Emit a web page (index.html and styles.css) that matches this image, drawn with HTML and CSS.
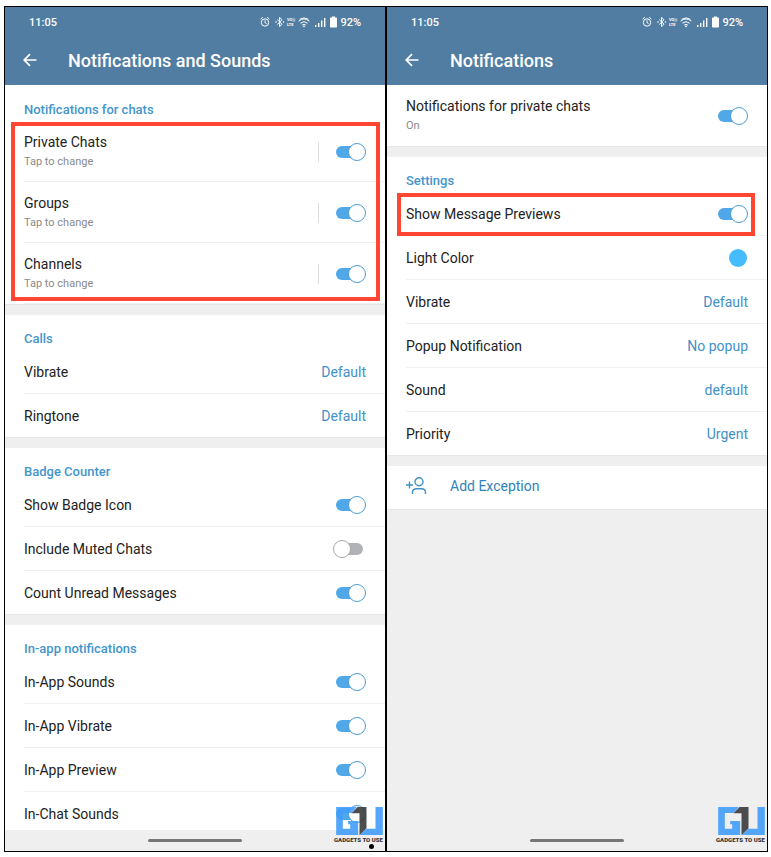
FILE: index.html
```
<!DOCTYPE html>
<html lang="en">
<head>
    <meta charset="UTF-8">
    <meta name="viewport" content="width=device-width, initial-scale=1.0">
    <title>Notifications and Sounds</title>
    <link rel="stylesheet" href="styles.css">
</head>
<body>
    <!-- Shared drawings -->
    <svg class="defs" aria-hidden="true">
        <symbol id="status-icons" viewBox="0 0 78 14" overflow="visible">
            <g fill="none" stroke="#fff" stroke-width="1">
                <circle cx="5" cy="7.5" r="3.7"/>
                <path d="M5 5.3v2.4l1.6 1M.6 4.2 2.8 2.2M9.4 4.2 7.2 2.2"/>
                <path d="M17.3 4.6 22 9.2 19.6 11.6V2.4L22 4.8 17.3 9.4"/>
                <path d="M38.6 6.2q5.4-4.6 10.8 0M40.4 8.2q3.6-3 7.2 0M42.2 10.1q1.8-1.4 3.6 0M39.6 4.3q4.4-2.8 8.8 0"/>
            </g>
            <g fill="#fff">
                <circle cx="16" cy="7" r=".8"/>
                <circle cx="23.4" cy="7" r=".8"/>
                <circle cx="44" cy="11.3" r=".9"/>
                <path d="M55 10h1.4v2H55zM58 8h1.4v4H58zM61 5.5h1.4V12H61zM64 3h1.4v9H64z"/>
                <path d="M72 1.5h3v1h1.2q.8 0 .8.8v8.4q0 .8-.8.8h-5.4q-.8 0-.8-.8V3.3q0-.8.8-.8H72z"/>
            </g>
        </symbol>
        <symbol id="back-arrow" viewBox="0 0 14 14">
            <path d="M13.500 7H1.200M7 1.200 1.200 7 7 12.800" fill="none" stroke="#fff" stroke-width="1.700"/>
        </symbol>
        <symbol id="logo" viewBox="0 0 140 84">
            <path fill="#429efb" d="M0 0h62L46 18H20v47h22V52H36V42h30v42H0z"/>
            <path fill="#429efb" d="M90 65h28V0h22v84H70z"/>
            <path fill="#3b3b3d" d="M64 0h27v64L70 84V19H46z"/>
        </symbol>
    </svg>

    <div class="screens">
        <!-- Notifications and Sounds -->
        <div class="screen">
            <div class="header">
                <div class="status-bar">
                    <span>11:05</span>
                    <svg class="status-icons" viewBox="0 0 78 14">
                        <use href="#status-icons"/>
                        <text class="volte" x="27" y="6">VO))</text>
                        <text class="volte" x="27" y="11">LTE</text>
                    </svg>
                    <span>92%</span>
                </div>
                <div class="title-bar">
                    <button class="back" aria-label="Back"><svg><use href="#back-arrow"/></svg></button>
                    <h1>Notifications and Sounds</h1>
                </div>
            </div>
            <div class="content">
                <div class="section first">
                    <h2>Notifications for chats</h2>
                    <div class="highlight">
                        <div class="row tall">
                            <label for="private-chats">Private Chats<small>Tap to change</small></label>
                            <span class="divider"></span>
                            <input type="checkbox" class="toggle" id="private-chats" checked>
                        </div>
                        <div class="row tall">
                            <label for="groups">Groups<small>Tap to change</small></label>
                            <span class="divider"></span>
                            <input type="checkbox" class="toggle" id="groups" checked>
                        </div>
                        <div class="row tall">
                            <label for="channels">Channels<small>Tap to change</small></label>
                            <span class="divider"></span>
                            <input type="checkbox" class="toggle" id="channels" checked>
                        </div>
                    </div>
                </div>
                <div class="section">
                    <h2>Calls</h2>
                    <button class="row">Vibrate<span class="value">Default</span></button>
                    <button class="row">Ringtone<span class="value">Default</span></button>
                </div>
                <div class="section">
                    <h2>Badge Counter</h2>
                    <div class="row">
                        <label for="badge-icon">Show Badge Icon</label>
                        <input type="checkbox" class="toggle" id="badge-icon" checked>
                    </div>
                    <div class="row">
                        <label for="muted-chats">Include Muted Chats</label>
                        <input type="checkbox" class="toggle" id="muted-chats">
                    </div>
                    <div class="row">
                        <label for="unread">Count Unread Messages</label>
                        <input type="checkbox" class="toggle" id="unread" checked>
                    </div>
                </div>
                <div class="section">
                    <h2>In-app notifications</h2>
                    <div class="row">
                        <label for="app-sounds">In-App Sounds</label>
                        <input type="checkbox" class="toggle" id="app-sounds" checked>
                    </div>
                    <div class="row">
                        <label for="app-vibrate">In-App Vibrate</label>
                        <input type="checkbox" class="toggle" id="app-vibrate" checked>
                    </div>
                    <div class="row">
                        <label for="app-preview">In-App Preview</label>
                        <input type="checkbox" class="toggle" id="app-preview" checked>
                    </div>
                    <div class="row">
                        <label for="chat-sounds">In-Chat Sounds</label>
                        <input type="checkbox" class="toggle" id="chat-sounds" checked>
                    </div>
                </div>
            </div>
            <div class="nav-bar"><span class="pill"></span></div>
            <div class="watermark">
                <svg><use href="#logo"/></svg>
                <span>GADGETS TO USE</span>
            </div>
            <span class="dot"></span>
        </div>

        <!-- Notifications for private chats -->
        <div class="screen">
            <div class="header">
                <div class="status-bar">
                    <span>11:05</span>
                    <svg class="status-icons" viewBox="0 0 78 14">
                        <use href="#status-icons"/>
                        <text class="volte" x="27" y="6">VO))</text>
                        <text class="volte" x="27" y="11">LTE</text>
                    </svg>
                    <span>92%</span>
                </div>
                <div class="title-bar">
                    <button class="back" aria-label="Back"><svg><use href="#back-arrow"/></svg></button>
                    <h1>Notifications</h1>
                </div>
            </div>
            <div class="content">
                <div class="section">
                    <div class="row tall">
                        <label for="private">Notifications for private chats<small>On</small></label>
                        <input type="checkbox" class="toggle" id="private" checked>
                    </div>
                </div>
                <div class="section">
                    <h2>Settings</h2>
                    <div class="highlight narrow">
                        <div class="row">
                            <label for="previews">Show Message Previews</label>
                            <input type="checkbox" class="toggle" id="previews" checked>
                        </div>
                    </div>
                    <button class="row">Light Color<span class="color"></span></button>
                    <button class="row">Vibrate<span class="value">Default</span></button>
                    <button class="row">Popup Notification<span class="value">No popup</span></button>
                    <button class="row">Sound<span class="value">default</span></button>
                    <button class="row">Priority<span class="value">Urgent</span></button>
                </div>
                <div class="section">
                    <button class="row add">
                        <svg viewBox="0 0 22 18">
                            <g fill="none" stroke="#3f91c8" stroke-width="1.400">
                                <circle cx="13" cy="4.800" r="4"/>
                                <path d="M6.500 17v-1.500q0-3.800 4-3.800h5q4 0 4 3.800V17M0 8h7M3.500 4.500v7"/>
                            </g>
                        </svg>
                        Add Exception
                    </button>
                </div>
            </div>
            <div class="nav-bar"><span class="pill"></span></div>
            <div class="watermark">
                <svg><use href="#logo"/></svg>
                <span>GADGETS TO USE</span>
            </div>
        </div>
    </div>
</body>
</html>
```
FILE: styles.css
```
*, *::before, *::after {
    box-sizing: border-box;
}
body {
    font-family: Roboto, Arial, sans-serif;
    font-size: 14px;
    margin: 0;
    padding: 6px 3px 5px 4px;
    height: 100vh;
    background: #fff;
    color: #222;
}
.defs {
    position: absolute;
    width: 0;
    height: 0;
}
.screens {
    display: grid;
    grid-template-columns: 1fr 1fr;
    gap: 2px;
    height: 100%;
    border: 1px solid #000;
    background: #000;
}
.screen {
    position: relative;
    display: flex;
    flex-direction: column;
    min-height: 0;
    overflow: hidden;
    background: #efefef;
}

/* Header */
.header {
    flex: none;
    height: 78px;
    background: #517da2;
    color: #fff;
}
.status-bar {
    display: flex;
    align-items: center;
    height: 30px;
    padding: 0 24px;
    font-size: 11px;
    font-weight: 500;
}
.status-icons {
    width: 78px;
    height: 14px;
    margin: 0 2px 0 auto;
    overflow: visible;
}
.volte {
    font-size: 4px;
    font-weight: bold;
    fill: #fff;
}
.title-bar {
    display: flex;
    align-items: center;
    gap: 31px;
    height: 46px;
    padding: 0 18px;
}
.back {
    display: flex;
    padding: 0;
    border: none;
    background: none;
    cursor: pointer;
}
.back svg {
    width: 14px;
    height: 14px;
}
h1 {
    margin: 0;
    font-size: 18px;
    font-weight: 500;
}

/* Settings list */
.content {
    flex: 1;
    min-height: 0;
    overflow: hidden;
}
.section {
    margin-bottom: 11px;
    background: #fff;
    box-shadow: 0 1px 0 #e6e6e6;
}
.section.first {
    padding-top: 1px;
}
.section h2 {
    margin: 0;
    padding: 13px 19px 0;
    font-size: 13px;
    font-weight: 500;
    line-height: 22px;
    color: #4396cc;
}
.row {
    position: relative;
    display: flex;
    align-items: center;
    width: 100%;
    height: 44px;
    padding: 0 19px;
    border: none;
    background: none;
    color: inherit;
    font: inherit;
    text-align: left;
}
.row::after {
    content: "";
    position: absolute;
    left: 19px;
    right: 0;
    bottom: 0;
    height: 1px;
    background: #f0f0f0;
}
.section > .row:last-child {
    height: 43px;
}
.section > .row:last-child::after {
    display: none;
}
.section > .row.tall,
.row.tall {
    height: 61px;
}
.row label {
    flex: 1;
    line-height: 20px;
}
.row small {
    display: block;
    font-size: 11px;
    color: #8a8a8a;
}
.divider {
    width: 1px;
    height: 20px;
    margin-right: 14px;
    background: #dedede;
}
.value {
    margin-left: auto;
    color: #3f91c8;
}
.color {
    width: 18px;
    height: 18px;
    margin-left: auto;
    margin-right: 1px;
    border-radius: 50%;
    background: #44bcfd;
}
.section > .row.add {
    gap: 22px;
    padding-bottom: 3px;
    color: #3083bb;
}
.row.add svg {
    width: 22px;
    height: 18px;
}

/* Toggle switch */
.toggle {
    appearance: none;
    position: relative;
    width: 33px;
    height: 18px;
    margin: 0;
    cursor: pointer;
}
.toggle::before {
    content: "";
    position: absolute;
    top: 3px;
    left: 3px;
    width: 27px;
    height: 12px;
    border-radius: 6px;
    background: #b0b2b5;
}
.toggle::after {
    content: "";
    position: absolute;
    top: 0;
    left: 0;
    width: 18px;
    height: 18px;
    border: 1px solid #a5a8ab;
    border-radius: 50%;
    background: #fff;
}
.toggle:checked::before {
    background: #50a8e8;
}
.toggle:checked::after {
    left: auto;
    right: 0;
    border-color: #4a9dd8;
}

/* Red frame around the options */
.highlight {
    position: relative;
}
.highlight::after {
    content: "";
    position: absolute;
    inset: 1px 5px 3px 6px;
    border: 4px solid #ff4633;
    pointer-events: none;
}
.highlight.narrow::after {
    inset: 1px 12px 0 10px;
}

/* Bottom bar */
.nav-bar {
    position: relative;
    display: flex;
    flex: none;
    align-items: center;
    justify-content: center;
    height: 21px;
    background: #efefef;
}
.pill {
    width: 94px;
    height: 3px;
    border-radius: 2px;
    background: #777;
}
.watermark {
    position: absolute;
    right: 0;
    bottom: 7px;
    width: 51px;
}
.watermark svg {
    display: block;
    width: 47px;
    height: 28px;
    margin-left: 2px;
    opacity: 0.9;
}
.watermark span {
    display: block;
    font-size: 6px;
    font-weight: 900;
    line-height: 9px;
    white-space: nowrap;
    color: #333;
}
.dot {
    position: absolute;
    right: 11px;
    bottom: 2px;
    width: 5px;
    height: 5px;
    border-radius: 50%;
    background: #000;
}
```
